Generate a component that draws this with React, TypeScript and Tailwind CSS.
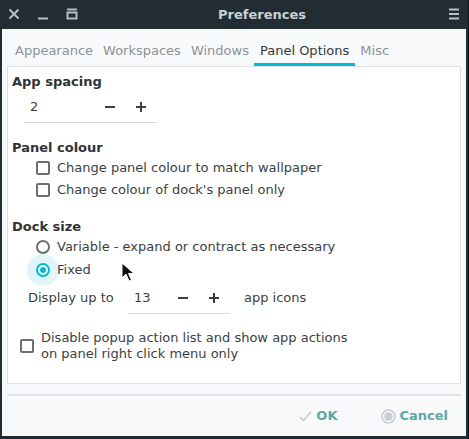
import React from 'react'

const font = {fontFamily: '"DejaVu Sans", "Noto Sans", sans-serif'}

const Checkbox = () => (
  <span className="inline-block w-[14px] h-[14px] border-2 border-[#6b7074] rounded-[2px] bg-white shrink-0" />
)

const Radio = ({checked}: {checked?: boolean}) => (
  <span className="relative inline-flex w-[14px] h-[14px] shrink-0 items-center justify-center">
    {checked && (
      <span className="absolute w-[32px] h-[32px] rounded-full bg-[#e1f5f8] left-[-9px] top-[-9px]" />
    )}
    <span
      className={
        checked
          ? 'relative flex w-[14px] h-[14px] rounded-full border-2 border-[#00bcd4] bg-white items-center justify-center'
          : 'relative flex w-[14px] h-[14px] rounded-full border-2 border-[#6b7074] bg-white'
      }
    >
      {checked && <span className="w-[6px] h-[6px] rounded-full bg-[#00bcd4]" />}
    </span>
  </span>
)

const Spin = ({value, width}: {value: string; width: string}) => (
  <div className={`flex items-center h-[32px] border-b border-[#dadcde] ${width}`}>
    <span className="pl-[6px] flex-1">{value}</span>
    <svg width="12" height="12" viewBox="0 0 12 12" className="mr-[19px]">
      <path d="M1 6h10" stroke="#3b3f42" strokeWidth="2" />
    </svg>
    <svg width="12" height="12" viewBox="0 0 12 12" className="mr-[10px]">
      <path d="M1 6h10M6 1v10" stroke="#3b3f42" strokeWidth="2" />
    </svg>
  </div>
)

const tabs = ['Appearance', 'Workspaces', 'Windows', 'Panel Options', 'Misc']

export default function App() {
  return (
    <div
      className="w-[469px] h-[439px] bg-[#222d33] flex flex-col border-r border-[#11181c] text-[13px] text-[#3b3f42]"
      style={font}
    >
      <div className="h-[29px] flex items-center relative shrink-0">
        <svg width="12" height="12" viewBox="0 0 12 12" className="absolute left-[8px] top-[8px]">
          <path d="M1.5 1.5l9 9M10.5 1.5l-9 9" stroke="#b6c0c6" strokeWidth="2" />
        </svg>
        <svg width="12" height="12" viewBox="0 0 12 12" className="absolute left-[37px] top-[8px]">
          <path d="M1 10.5h10" stroke="#b6c0c6" strokeWidth="2" />
        </svg>
        <svg width="12" height="12" viewBox="0 0 12 12" className="absolute left-[66px] top-[8px]">
          <path d="M1 1.5h10" stroke="#b6c0c6" strokeWidth="2" />
          <rect x="1.5" y="4.5" width="9" height="6" fill="none" stroke="#b6c0c6" strokeWidth="2" />
        </svg>
        <span className="w-full text-center font-bold text-[#c9d1d5] pl-[56px]">Preferences</span>
        <svg width="12" height="12" viewBox="0 0 12 12" className="absolute left-[448px] top-[8px]">
          <path d="M1 1.5h10M1 6h10M1 10.5h10" stroke="#b6c0c6" strokeWidth="2" />
        </svg>
      </div>

      <div className="flex-1 mx-[2px] mb-[3px] bg-[#f8f9fb] flex flex-col">
        <div className="h-[37px] flex items-end pl-[8px] shrink-0">
          {tabs.map(t => (
            <div
              key={t}
              className={
                t === 'Panel Options'
                  ? 'h-[36px] px-[6px] flex items-center border-b-[3px] border-[#00bcd4] text-[#33393b] pt-[9px]'
                  : 'h-[36px] px-[5px] flex items-center border-b-[3px] border-transparent text-[#8d9296] pt-[9px]'
              }
            >
              {t}
            </div>
          ))}
        </div>

        <div className="relative mx-[5px] h-[318px] border border-[#dfe1e3] bg-white pl-[4px] pt-[6px] flex flex-col">
          <div className="h-[18px] leading-[18px] font-bold text-[#2e3436]">App spacing</div>
          <div className="ml-[12px]">
            <Spin value="2" width="w-[133px]" />
          </div>

          <div className="mt-[16px] h-[18px] leading-[18px] font-bold text-[#2e3436]">Panel colour</div>
          <div className="h-[22px] flex items-center gap-[7px] pl-[24px]">
            <Checkbox />
            <span>Change panel colour to match wallpaper</span>
          </div>
          <div className="h-[22px] flex items-center gap-[7px] pl-[24px]">
            <Checkbox />
            <span>Change colour of dock's panel only</span>
          </div>

          <div className="mt-[18px] h-[16px] leading-[16px] font-bold text-[#2e3436]">Dock size</div>
          <div className="h-[23px] flex items-center gap-[7px] pl-[24px]">
            <Radio />
            <span>Variable - expand or contract as necessary</span>
          </div>
          <div className="h-[23px] flex items-center gap-[7px] pl-[24px]">
            <Radio checked />
            <span className="relative">Fixed</span>
          </div>

          <div className="mt-[1px] flex items-center pl-[16px]">
            <span className="w-[100px]">Display up to</span>
            <Spin value="13" width="w-[102px]" />
            <span className="ml-[14px]">app icons</span>
          </div>

          <div className="mt-[16px] flex items-center gap-[7px] pl-[8px]">
            <Checkbox />
            <span className="leading-[16px]">
              Disable popup action list and show app actions
              <br />
              on panel right click menu only
            </span>
          </div>

          <svg width="14" height="21" viewBox="0 0 14 21" className="absolute left-[113px] top-[195px]">
            <path
              d="M1 1v15l4-4 3 7 2.5-1-3-6.5H13z"
              fill="#111"
              stroke="#fff"
              strokeWidth="1"
              strokeLinejoin="round"
            />
          </svg>
        </div>

        <div className="mx-[5px] mt-[10px] border-t-2 border-[#e1e3e6]" />

        <div className="flex-1 flex items-center justify-end pr-[18px] gap-[44px] font-bold text-[#5ea8a2]">
          <div className="flex items-center gap-[4px]">
            <svg width="13" height="12" viewBox="0 0 13 12">
              <path d="M1 7l3.5 3.5L12 1.5" fill="none" stroke="#c8ced3" strokeWidth="1.6" />
            </svg>
            <span>OK</span>
          </div>
          <div className="flex items-center gap-[3px]">
            <svg width="15" height="15" viewBox="0 0 15 15">
              <circle cx="7.5" cy="7.5" r="6.5" fill="none" stroke="#c8ced3" strokeWidth="1.6" />
              <circle cx="7.5" cy="7.5" r="4.2" fill="#c8ced3" />
            </svg>
            <span>Cancel</span>
          </div>
        </div>
      </div>
    </div>
  )
}
